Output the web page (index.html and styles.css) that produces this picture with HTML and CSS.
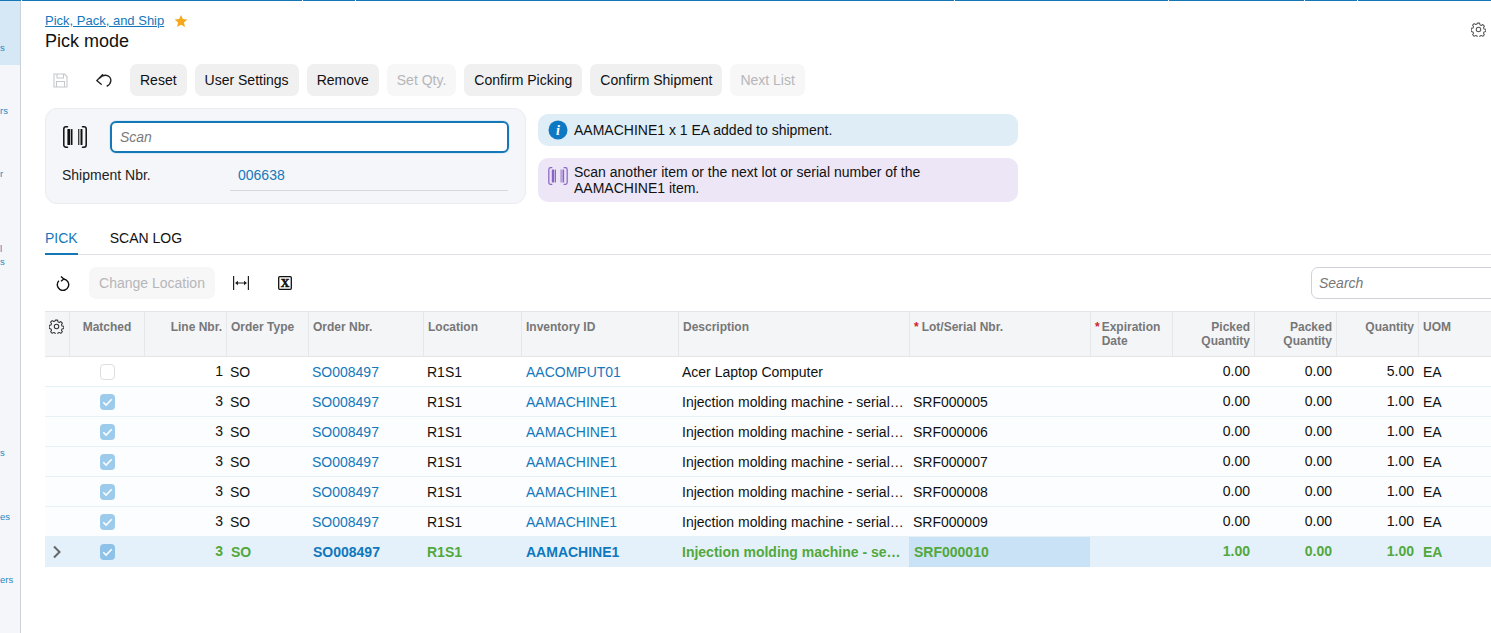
FILE: index.html
```html
<!DOCTYPE html>
<html lang="en">
<head>
<meta charset="utf-8">
<title>Pick, Pack, and Ship</title>
<link rel="stylesheet" href="styles.css">
</head>
<body>
<svg class="defs" width="0" height="0" aria-hidden="true">
  <symbol id="gear" viewBox="0 0 16 16"><g fill="none" stroke="currentColor" stroke-width="1.100" stroke-linejoin="round"><circle cx="8" cy="8" r="2.400"/><path d="M6.800 1.200h2.400l.4 1.900 1.300.6 1.700-1 1.700 1.700-1 1.700.6 1.300 1.900.4v2.400l-1.900.4-.6 1.300 1 1.700-1.700 1.700-1.700-1-1.300.6-.4 1.900H6.800l-.4-1.900-1.300-.6-1.700 1-1.700-1.700 1-1.700-.6-1.300-1.900-.4V6.800l1.900-.4.6-1.300-1-1.700 1.700-1.700 1.700 1 1.300-.6z"/></g></symbol>
  <symbol id="check" viewBox="0 0 16 16"><path d="M3.500 8.300l3 3 6-6.300" fill="none" stroke="#fff" stroke-width="1.600"/></symbol>
  <symbol id="barcode" viewBox="0 0 24 22"><g fill="none" stroke="currentColor" stroke-width="1.500" stroke-linecap="round"><path d="M4.500 .8H3a2.200 2.200 0 0 0-2.200 2.200v16A2.200 2.200 0 0 0 3 21.200h1.500"/><path d="M19.500 .8H21A2.200 2.200 0 0 1 23.200 3v16a2.200 2.200 0 0 1-2.200 2.200h-1.500"/></g><g fill="currentColor"><rect x="4.400" y="3" width="2.900" height="16" rx=".6"/><rect x="8" y="3" width="1.500" height="16" rx=".5"/><rect x="15.200" y="3" width="1.100" height="16"/><rect x="17.500" y="3" width="2" height="16" rx=".5"/></g></symbol>
</svg>
<div class="topline">
  <span class="seg s1"></span><span class="seg s2"></span><span class="seg s3"></span><span class="seg s4"></span><span class="seg s5"></span><span class="seg s6"></span><span class="seg s7"></span><span class="seg s8"></span>
</div>
<div class="app">
  <nav class="sidebar">
    <div class="nav-item active">s</div>
    <div class="nav-item">rs</div>
    <div class="nav-item">r</div>
    <div class="nav-item tall">l<br>s</div>
    <div class="nav-item huge">s</div>
    <div class="nav-item wide-gap">es</div>
    <div class="nav-item">ers</div>
  </nav>
  <main class="main">
    <header class="head">
      <div>
        <div class="crumbs">
          <a class="crumb" href="#">Pick, Pack, and Ship</a>
          <svg class="star" viewBox="0 0 24 24"><path fill="#f5a81c" d="M12 1.500l3.200 7.100 7.700.8-5.800 5.200 1.700 7.600-6.800-3.900-6.800 3.900 1.700-7.600L1.100 9.400l7.700-.8z"/></svg>
        </div>
        <h1 class="title">Pick mode</h1>
      </div>
      <svg class="page-gear"><use href="#gear"/></svg>
    </header>

    <div class="toolbar">
      <span class="tool tool-save"><svg viewBox="0 0 15 15" width="15" height="15"><path fill="none" stroke="#c6c8cb" stroke-width="1.100" d="M1 1h10.500L14 3.500V14H1zM4 1v4h6.500V1M3.500 14V8.500h8V14"/></svg></span>
      <span class="tool tool-undo"><svg viewBox="0 0 16 13" width="16" height="13"><path fill="none" stroke="#222" stroke-width="1.400" stroke-linecap="round" d="M6.500 .8L.8 6.600l4.400 3.600M3.400 4.200C5 2.200 7.200 1 9.800 1.200c3.400.3 5.300 3 5 5.600-.2 2.400-1.700 4.300-3.600 5.200"/></svg></span>
      <button class="btn">Reset</button>
      <button class="btn">User Settings</button>
      <button class="btn">Remove</button>
      <button class="btn off">Set Qty.</button>
      <button class="btn">Confirm Picking</button>
      <button class="btn">Confirm Shipment</button>
      <button class="btn off">Next List</button>
    </div>

    <section class="scan-row">
      <div class="scan-panel">
        <div class="scan-line">
          <svg class="scan-icon"><use href="#barcode"/></svg>
          <div class="scan-input">Scan</div>
        </div>
        <div class="ship-line">
          <span class="ship-label">Shipment Nbr.</span>
          <span class="ship-value">006638</span>
        </div>
      </div>
      <div class="messages">
        <div class="msg msg-info">
          <svg class="msg-icon" viewBox="0 0 20 20"><circle cx="10" cy="10" r="9.500" fill="#0f78c2"/><text x="10" y="15" text-anchor="middle" class="i-glyph">i</text></svg>
          <span>AAMACHINE1 x 1 EA added to shipment.</span>
        </div>
        <div class="msg msg-prompt">
          <svg class="msg-icon prompt-icon"><use href="#barcode"/></svg>
          <span>Scan another item or the next lot or serial number of the AAMACHINE1 item.</span>
        </div>
      </div>
    </section>

    <div class="tabs">
      <span class="tab on">PICK</span>
      <span class="tab">SCAN LOG</span>
    </div>

    <div class="grid-tools">
      <span class="tool tool-refresh"><svg viewBox="0 0 14 15" width="14" height="15"><path fill="none" stroke="#111" stroke-width="1.400" d="M7.600 3A5.700 5.700 0 1 1 2.900 4.700"/><path fill="none" stroke="#111" stroke-width="1.400" d="M5 .5L7.800 3 5 5.300"/></svg></span>
      <button class="btn off wide">Change Location</button>
      <span class="tool tool-fit"><svg viewBox="0 0 16 14" width="16" height="14"><path fill="none" stroke="#222" stroke-width="1.200" d="M.6 0v14M15.400 0v14M3 7h10"/><path fill="#222" d="M2 7l3-2.200v4.400zM14 7l-3-2.200v4.400z"/></svg></span>
      <span class="tool tool-xl"><svg viewBox="0 0 14 14" width="14" height="14"><rect x=".7" y=".7" width="12.600" height="12.600" rx="1" fill="none" stroke="#111" stroke-width="1.300"/><text x="7" y="11.300" text-anchor="middle" class="x-glyph">X</text></svg></span>
      <div class="search">Search</div>
    </div>

    <div class="table">
      <div class="row hdr">
        <div class="c"><svg class="hdr-gear"><use href="#gear"/></svg></div>
        <div class="c ctr">Matched</div>
        <div class="c r">Line Nbr.</div>
        <div class="c">Order Type</div>
        <div class="c">Order Nbr.</div>
        <div class="c">Location</div>
        <div class="c">Inventory ID</div>
        <div class="c">Description</div>
        <div class="c"><i class="req">*</i>Lot/Serial Nbr.</div>
        <div class="c req-wrap"><i class="req">*</i><span>Expiration<br>Date</span></div>
        <div class="c r">Picked<br>Quantity</div>
        <div class="c r">Packed<br>Quantity</div>
        <div class="c r">Quantity</div>
        <div class="c">UOM</div>
      </div>

      <div class="row first">
        <div class="c"></div>
        <div class="c ctr"><span class="cb"></span></div>
        <div class="c r">1</div>
        <div class="c">SO</div>
        <div class="c"><a class="lnk" href="#">SO008497</a></div>
        <div class="c">R1S1</div>
        <div class="c"><a class="lnk" href="#">AACOMPUT01</a></div>
        <div class="c">Acer Laptop Computer</div>
        <div class="c"></div>
        <div class="c"></div>
        <div class="c r">0.00</div>
        <div class="c r">0.00</div>
        <div class="c r">5.00</div>
        <div class="c">EA</div>
      </div>

      <div class="row">
        <div class="c"></div>
        <div class="c ctr"><span class="cb on"><svg><use href="#check"/></svg></span></div>
        <div class="c r">3</div>
        <div class="c">SO</div>
        <div class="c"><a class="lnk" href="#">SO008497</a></div>
        <div class="c">R1S1</div>
        <div class="c"><a class="lnk" href="#">AAMACHINE1</a></div>
        <div class="c">Injection molding machine - serial tracked</div>
        <div class="c">SRF000005</div>
        <div class="c"></div>
        <div class="c r">0.00</div>
        <div class="c r">0.00</div>
        <div class="c r">1.00</div>
        <div class="c">EA</div>
      </div>

      <div class="row">
        <div class="c"></div>
        <div class="c ctr"><span class="cb on"><svg><use href="#check"/></svg></span></div>
        <div class="c r">3</div>
        <div class="c">SO</div>
        <div class="c"><a class="lnk" href="#">SO008497</a></div>
        <div class="c">R1S1</div>
        <div class="c"><a class="lnk" href="#">AAMACHINE1</a></div>
        <div class="c">Injection molding machine - serial tracked</div>
        <div class="c">SRF000006</div>
        <div class="c"></div>
        <div class="c r">0.00</div>
        <div class="c r">0.00</div>
        <div class="c r">1.00</div>
        <div class="c">EA</div>
      </div>

      <div class="row">
        <div class="c"></div>
        <div class="c ctr"><span class="cb on"><svg><use href="#check"/></svg></span></div>
        <div class="c r">3</div>
        <div class="c">SO</div>
        <div class="c"><a class="lnk" href="#">SO008497</a></div>
        <div class="c">R1S1</div>
        <div class="c"><a class="lnk" href="#">AAMACHINE1</a></div>
        <div class="c">Injection molding machine - serial tracked</div>
        <div class="c">SRF000007</div>
        <div class="c"></div>
        <div class="c r">0.00</div>
        <div class="c r">0.00</div>
        <div class="c r">1.00</div>
        <div class="c">EA</div>
      </div>

      <div class="row">
        <div class="c"></div>
        <div class="c ctr"><span class="cb on"><svg><use href="#check"/></svg></span></div>
        <div class="c r">3</div>
        <div class="c">SO</div>
        <div class="c"><a class="lnk" href="#">SO008497</a></div>
        <div class="c">R1S1</div>
        <div class="c"><a class="lnk" href="#">AAMACHINE1</a></div>
        <div class="c">Injection molding machine - serial tracked</div>
        <div class="c">SRF000008</div>
        <div class="c"></div>
        <div class="c r">0.00</div>
        <div class="c r">0.00</div>
        <div class="c r">1.00</div>
        <div class="c">EA</div>
      </div>

      <div class="row">
        <div class="c"></div>
        <div class="c ctr"><span class="cb on"><svg><use href="#check"/></svg></span></div>
        <div class="c r">3</div>
        <div class="c">SO</div>
        <div class="c"><a class="lnk" href="#">SO008497</a></div>
        <div class="c">R1S1</div>
        <div class="c"><a class="lnk" href="#">AAMACHINE1</a></div>
        <div class="c">Injection molding machine - serial tracked</div>
        <div class="c">SRF000009</div>
        <div class="c"></div>
        <div class="c r">0.00</div>
        <div class="c r">0.00</div>
        <div class="c r">1.00</div>
        <div class="c">EA</div>
      </div>

      <div class="row sel">
        <div class="c chev-cell"><svg viewBox="0 0 10 14" width="10" height="14"><path d="M2 1.500L7.500 7 2 12.500" fill="none" stroke="#666" stroke-width="2"/></svg></div>
        <div class="c ctr"><span class="cb on"><svg><use href="#check"/></svg></span></div>
        <div class="c r">3</div>
        <div class="c">SO</div>
        <div class="c"><a class="lnk" href="#">SO008497</a></div>
        <div class="c">R1S1</div>
        <div class="c"><a class="lnk" href="#">AAMACHINE1</a></div>
        <div class="c">Injection molding machine - serial tracked</div>
        <div class="c focus">SRF000010</div>
        <div class="c"></div>
        <div class="c r">1.00</div>
        <div class="c r">0.00</div>
        <div class="c r">1.00</div>
        <div class="c">EA</div>
      </div>
    </div>
  </main>
</div>
</body>
</html>
```
FILE: styles.css
```css
* { box-sizing: border-box; }
html, body { margin: 0; height: 100%; overflow: hidden; background: #fff; }
body { font-family: "Liberation Sans", Arial, sans-serif; font-size: 14px; color: #111; }
.defs { position: absolute; }

.topline { display: flex; gap: 1px; height: 1px; }
.seg { background: #1577b5; }
.s1 { width: 21px; }
.s2 { width: 280px; }
.s3 { width: 52px; }
.s4 { width: 598px; }
.s5 { width: 213px; }
.s6 { width: 135px; }
.s7 { width: 52px; }
.s8 { flex: 1; }
.app { display: flex; height: 632px; }

.sidebar { flex: 0 0 21px; background: #f4f6f9; border-right: 1px solid #cdd2d9; overflow: hidden; color: #2b86c2; font-size: 9.500px; line-height: 13px; }
.nav-item { height: 63px; display: flex; align-items: flex-end; padding-bottom: 11px; }
.nav-item.active { height: 64px; background: #d6e8f6; }
.nav-item.tall { height: 82px; padding-bottom: 5px; }
.nav-item.huge { height: 197px; }
.nav-item.wide-gap { height: 64px; }

.main { flex: 1; min-width: 0; padding-left: 24px; overflow: hidden; }

.head { display: flex; justify-content: space-between; height: 63px; padding-top: 12px; }
.crumbs { display: flex; align-items: center; gap: 10px; height: 15px; }
.crumb { color: #1578bb; font-size: 13px; line-height: 15px; }
.star { width: 14px; height: 14px; }
.title { margin: 2px 0 0; font-size: 18px; font-weight: 400; line-height: 22px; color: #111; }
.page-gear { width: 15px; height: 15px; margin: 9px 5px 0 0; color: #555; }

.toolbar { display: flex; align-items: center; height: 32px; gap: 8px; }
.tool { display: flex; align-items: center; justify-content: center; }
.tool-save { width: 30px; margin-right: 7px; }
.tool-undo { width: 30px; margin-right: 3px; margin-left: -1px; }
.btn { height: 32px; padding: 0 10px; border: 0; border-radius: 7px; background: #f0f0f1; font: 14px "Liberation Sans", Arial, sans-serif; color: #111; }
.btn.off { background: #f7f7f8; color: #b5b6b8; }
.btn.wide { width: 126px; padding: 0; }

.scan-row { display: flex; gap: 12px; margin-top: 12px; height: 97px; }
.scan-panel { width: 481px; height: 96px; background: #f4f6f9; border: 1px solid #eaecf0; border-radius: 12px; padding: 12px 16px 0 17px; }
.scan-line { display: flex; align-items: center; height: 32px; }
.scan-icon { width: 24px; height: 22px; margin-right: 23px; color: #111; }
.scan-input { width: 399px; height: 32px; border: 2px solid #1577b5; border-radius: 6px; background: #fff; box-shadow: 0 0 0 1px #dcedf8; padding: 0 8px; line-height: 28px; font-style: italic; color: #7b7b7b; font-size: 14px; }
.ship-line { display: flex; margin-top: 6px; margin-left: -1px; height: 32px; width: 446px; align-items: center; }
.ship-label { width: 168px; color: #222; }
.ship-value { flex: 1; height: 32px; line-height: 32px; padding-left: 8px; color: #1578bb; border-bottom: 1px solid #d6d8db; }

.messages { width: 480px; padding-top: 6px; display: flex; flex-direction: column; gap: 12px; }
.msg { display: flex; gap: 6px; border-radius: 10px; padding: 6px 10px; line-height: 16px; color: #111; }
.msg-info { height: 32px; background: #dfedf7; align-items: center; }
.msg-prompt { height: 44px; background: #ece6f6; }
.msg-icon { flex: none; width: 20px; height: 20px; }
.prompt-icon { color: #8a63c6; height: 18px; margin-top: 3px; }
.i-glyph { fill: #fff; font: italic bold 14px "Liberation Serif", serif; }
.x-glyph { fill: #111; stroke: #111; stroke-width: .5px; font: bold 12px "Liberation Serif", serif; }

.tabs { display: flex; gap: 32px; margin-top: 18px; height: 32px; border-bottom: 1px solid #dfe2e6; width: 1446px; }
.tab { height: 32px; line-height: 31px; font-size: 14px; color: #111; }
.tab.on { color: #1578bb; border-bottom: 2px solid #1577b5; }

.grid-tools { display: flex; align-items: center; height: 32px; margin-top: 12px; position: relative; }
.tool-refresh { width: 36px; margin-right: 8px; }
.tool-fit { width: 16px; margin-left: 18px; }
.tool-xl { width: 14px; margin-left: 29px; }
.search { position: absolute; left: 1266px; top: 0; width: 220px; height: 32px; border: 1px solid #cfd2d6; border-radius: 7px; padding-left: 7px; line-height: 30px; font-style: italic; color: #777; }

.table { margin-top: 12px; width: 1446px; }
.row { display: grid; grid-template-columns: 25px 75px 82px 82px 115px 98px 157px 231px 181px 82px 82px 82px 82px 72px; height: 30px; background: #fbfdfe; border-bottom: 1px solid #e6f0f7; line-height: 30px; }
.row.first { background: #fff; }
.c { padding: 0 4px; white-space: nowrap; overflow: hidden; text-overflow: ellipsis; }
.r { text-align: right; }
.ctr { text-align: center; }
.lnk { color: #1578bb; text-decoration: none; }

/* body cells sit a pixel left of their header; numbers a pixel higher */
.row:not(.hdr) .c:nth-child(6), .row:not(.hdr) .c:nth-child(8) { padding-left: 3px; }
.row:not(.hdr):not(.sel) .c:nth-child(4),
.row:not(.hdr):not(.sel) .c:nth-child(5),
.row:not(.hdr):not(.sel) .c:nth-child(9) { padding-left: 3px; }
.row:not(.hdr) .r { line-height: 28px; }
.row:not(.hdr) .c:nth-child(n+11):nth-child(-n+13) { padding-right: 5px; }

.hdr { height: 46px; background: #f4f5f7; border-top: 1px solid #e3e5e8; border-bottom: 1px solid #e3e5e8; font-size: 12px; font-weight: 700; color: #777; line-height: 14px; }
.hdr .c { padding-top: 8px; border-right: 1px solid #e6e7ea; overflow: visible; white-space: normal; }
.hdr .c:last-child { border-right: 0; }
.hdr-gear { width: 15px; height: 15px; color: #333; display: block; margin: -1px 0 0; }
.hdr .c:first-child { padding-left: 4px; padding-right: 0; }
.req { color: #d0222a; font-style: normal; margin-right: 3px; }
.req-wrap { display: flex; }
.req-wrap .req { margin-right: 2px; }

.cb { display: inline-block; width: 15px; height: 16px; margin: 7px 1px 0 0; border: 1px solid #dcdee1; border-radius: 4px; background: #fff; vertical-align: top; }
.cb.on { border: 0; background: #9ccbec; }
.cb svg { width: 15px; height: 16px; display: block; }

.sel { background: #e4f1fa; border-bottom: 0; font-weight: 700; color: #52a83c; }
.sel .lnk { color: #0f78bd; }
.sel .cb.on { background: #8fc2e8; }
.focus { background: #c9e2f5; margin: 0 1px 0 -1px; padding-left: 5px; }
.chev-cell { display: flex; align-items: center; justify-content: center; padding: 0 1px 0 0; }
```
